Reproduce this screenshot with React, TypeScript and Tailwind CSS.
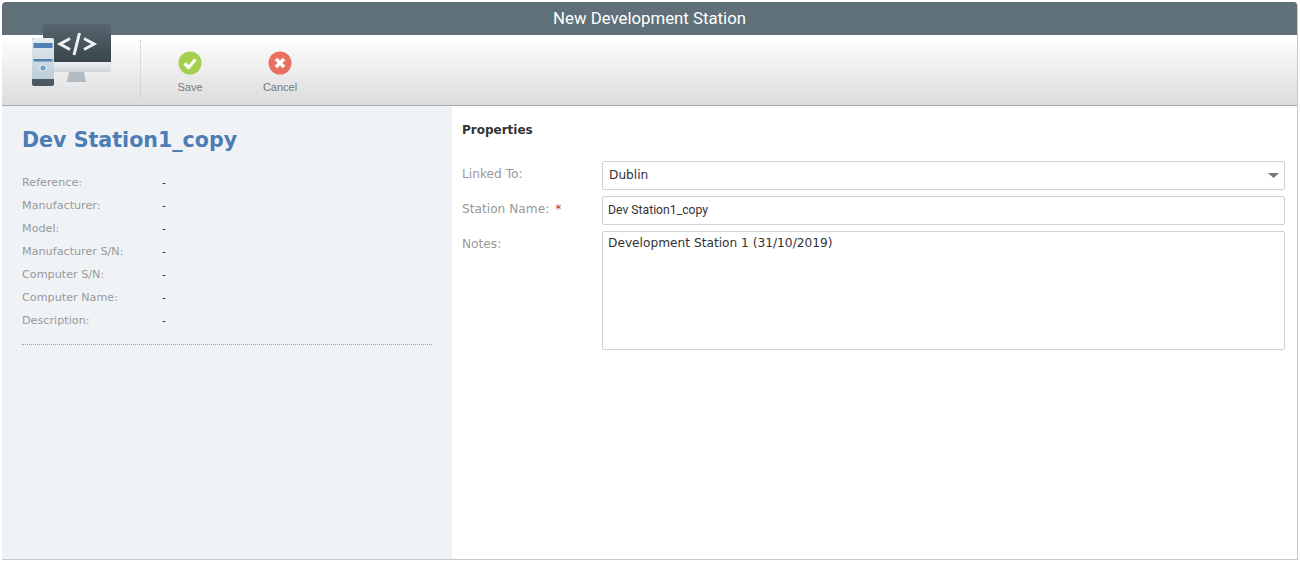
const summary = [
  "Reference:",
  "Manufacturer:",
  "Model:",
  "Manufacturer S/N:",
  "Computer S/N:",
  "Computer Name:",
  "Description:",
];

function StationLogo() {
  return (
    <svg width="84" height="68" viewBox="0 0 84 68" className="absolute left-[28px] top-[20px]">
      <defs>
        <linearGradient id="screen" x1="0" y1="0" x2="0" y2="1">
          <stop offset="0" stopColor="#56666f" />
          <stop offset="1" stopColor="#343d43" />
        </linearGradient>
        <linearGradient id="tower" x1="0" y1="0" x2="0" y2="1">
          <stop offset="0" stopColor="#e4ecf0" />
          <stop offset="1" stopColor="#bccdd6" />
        </linearGradient>
        <linearGradient id="chin" x1="0" y1="0" x2="0" y2="1">
          <stop offset="0" stopColor="#eef1f3" />
          <stop offset="1" stopColor="#cfd5d9" />
        </linearGradient>
      </defs>
      <rect x="13" y="2" width="68" height="46" rx="2" fill="url(#screen)" />
      <path d="M13 40h68v7a3 3 0 0 1-3 3H16a3 3 0 0 1-3-3z" fill="url(#chin)" />
      <path d="M39 50h15l2 10H37z" fill="#b4bcc1" />
      <rect x="32" y="60" width="28" height="4" rx="2" fill="#e8ebec" />
      <path d="M40 16.500L30 22l10 5.500M49.500 11L44 33M54 16.500L64 22l-10 5.500" fill="none" stroke="#eef1f2" strokeWidth="3" />
      <rect x="2" y="16" width="22" height="48" rx="2" fill="#4b5961" />
      <path d="M2 18a2 2 0 0 1 2-2h18a2 2 0 0 1 2 2v39H2z" fill="url(#tower)" />
      <rect x="3.500" y="21" width="19" height="5" fill="#4f81b5" />
      <rect x="3.500" y="37" width="19" height="2.500" fill="#4f81b5" />
      <circle cx="13" cy="46" r="3.200" fill="#6da3c9" stroke="#f0f5f8" strokeWidth="1" />
    </svg>
  );
}

export default function App() {
  return (
    <div className="h-[561px] w-[1300px] overflow-hidden bg-white p-[2px] font-['DejaVu_Sans',sans-serif]">
      <div className="relative flex h-[558px] w-[1296px] flex-col overflow-hidden rounded-t-[4px] border-b border-r border-[#c8c8c8] bg-white">
        <div className="flex h-[33px] shrink-0 items-center justify-center bg-[#5f7079] font-['Roboto',sans-serif] text-[16.8px] text-white">
          New Development Station
        </div>

        <div className="flex h-[71px] shrink-0 items-start border-b border-[#a9a9a9] bg-gradient-to-b from-white to-[#dcdcdc] pl-[138px] font-['Liberation_Sans',sans-serif] text-[11px] text-[#777]">
          <StationLogo />
          <div className="mt-[5px] h-[58px] border-l border-dotted border-[#c4c4c4]" />
          <div className="ml-[19px] mt-[16px] flex w-[60px] flex-col items-center gap-[4px]">
            <svg width="24" height="24" viewBox="0 0 24 24">
              <circle cx="12" cy="12" r="11.500" fill="#a5cf4e" />
              <path d="M6.500 12.500l4 4 7-8" fill="none" stroke="#fff" strokeWidth="3.200" />
            </svg>
            <span>Save</span>
          </div>
          <div className="ml-[30px] mt-[16px] flex w-[60px] flex-col items-center gap-[4px]">
            <svg width="24" height="24" viewBox="0 0 24 24">
              <circle cx="12" cy="12" r="11.500" fill="#e8705f" />
              <path d="M8 8l8 8M16 8l-8 8" fill="none" stroke="#fff" strokeWidth="3.400" />
            </svg>
            <span>Cancel</span>
          </div>
        </div>

        <div className="flex min-h-0 flex-1">
          <aside className="w-[450px] shrink-0 bg-[#eff3f6] pl-[20px] pr-[20px] pt-[21px]">
            <h1 className="text-[20.6px] font-bold leading-[26px] text-[#4d7db4]">Dev Station1_copy</h1>
            <div className="mt-[19px] flex flex-col border-b border-dotted border-[#a3a3a3] pb-[11px]">
              {summary.map((label) => (
                <div key={label} className="flex h-[23px] items-center text-[11.2px] text-[#999]">
                  <span className="w-[140px]">{label}</span>
                  <span className="text-[#333]">-</span>
                </div>
              ))}
            </div>
          </aside>

          <main className="flex-1 pl-[10px] pr-[12px] pt-[16px] text-[12.2px]">
            <h2 className="text-[12px] font-bold leading-[16px] text-[#333]">Properties</h2>
            <div className="mt-[23px] flex flex-col gap-[6px]">
              <div className="flex items-start">
                <label className="w-[140px] pt-[4px] text-[#999]">Linked To:</label>
                <div className="flex h-[29px] flex-1 items-center justify-between rounded-[2px] border border-[#d0d0d0] pl-[6px] pr-[5px] text-[#333]">
                  <span>Dublin</span>
                  <svg width="11" height="5" viewBox="0 0 11 5">
                    <path d="M0 0h11L5.500 5z" fill="#777" />
                  </svg>
                </div>
              </div>
              <div className="flex items-start">
                <label className="w-[140px] pt-[4px] text-[#999]">
                  Station Name: <span className="ml-[2px] text-[#c0392b]">*</span>
                </label>
                <div className="flex h-[29px] flex-1 items-center rounded-[2px] border border-[#d0d0d0] pl-[5px] font-['Roboto',sans-serif] text-[#333]">
                  Dev Station1_copy
                </div>
              </div>
              <div className="flex items-start">
                <label className="w-[140px] pt-[4px] text-[#999]">Notes:</label>
                <div className="h-[119px] flex-1 rounded-[2px] border border-[#d0d0d0] pl-[5px] pt-[2px] text-[#333]">
                  Development Station 1 (31/10/2019)
                </div>
              </div>
            </div>
          </main>
        </div>
      </div>
    </div>
  );
}
